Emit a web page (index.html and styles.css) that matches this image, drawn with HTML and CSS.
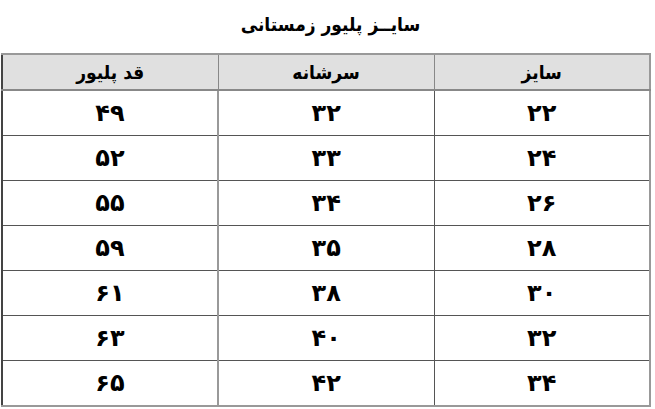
FILE: index.html
```html
<!DOCTYPE html>
<html lang="fa" dir="rtl">
<head>
<meta charset="utf-8">
<link rel="stylesheet" href="styles.css">
</head>
<body>
<h1 class="title">سایــز پلیور زمستانی</h1>
<table class="size-table">
<thead>
<tr><th>سایز</th><th>سرشانه</th><th>قد پلیور</th></tr>
</thead>
<tbody>
<tr><td>۲۲</td><td>۳۲</td><td>۴۹</td></tr>
<tr><td>۲۴</td><td>۳۳</td><td>۵۲</td></tr>
<tr><td>۲۶</td><td>۳۴</td><td>۵۵</td></tr>
<tr><td>۲۸</td><td>۳۵</td><td>۵۹</td></tr>
<tr><td>۳۰</td><td>۳۸</td><td>۶۱</td></tr>
<tr><td>۳۲</td><td>۴۰</td><td>۶۳</td></tr>
<tr><td>۳۴</td><td>۴۲</td><td>۶۵</td></tr>
</tbody>
</table>
</body>
</html>
```
FILE: styles.css
```css
html, body {
  margin: 0;
  padding: 0;
  background: #ffffff;
}
body {
  font-family: "DejaVu Sans", sans-serif;
  color: #000;
  width: 655px;
}
.title {
  margin: 0;
  height: 53px;
  line-height: 48px;
  font-family: "DejaVu Sans Condensed", "DejaVu Sans", sans-serif;
  font-size: 19px;
  font-weight: bold;
  text-align: center;
  padding-left: 6px;
}
.size-table {
  width: 650px;
  margin-right: 4px;
  margin-left: 1px;
  border-collapse: collapse;
  table-layout: fixed;
  border: 2px solid #999;
  border-left-color: #444;
}
.size-table th {
  background: #e0e0e0;
  height: 34px;
  padding: 0;
  font-family: "DejaVu Sans Condensed", "DejaVu Sans", sans-serif;
  font-size: 19px;
  font-weight: bold;
  border: 1px solid #888;
  border-top: 2px solid #999;
  border-bottom: 2px solid #888;
}
.size-table td {
  height: 44px;
  padding: 0;
  text-align: center;
  font-size: 24px;
  font-weight: bold;
  line-height: 30px;
  border: 1px solid #555;
}
.size-table td:nth-child(2) {
  border-left: 2px solid #999;
}
.size-table tr:last-child td {
  border-bottom: 2px solid #999;
}
```
